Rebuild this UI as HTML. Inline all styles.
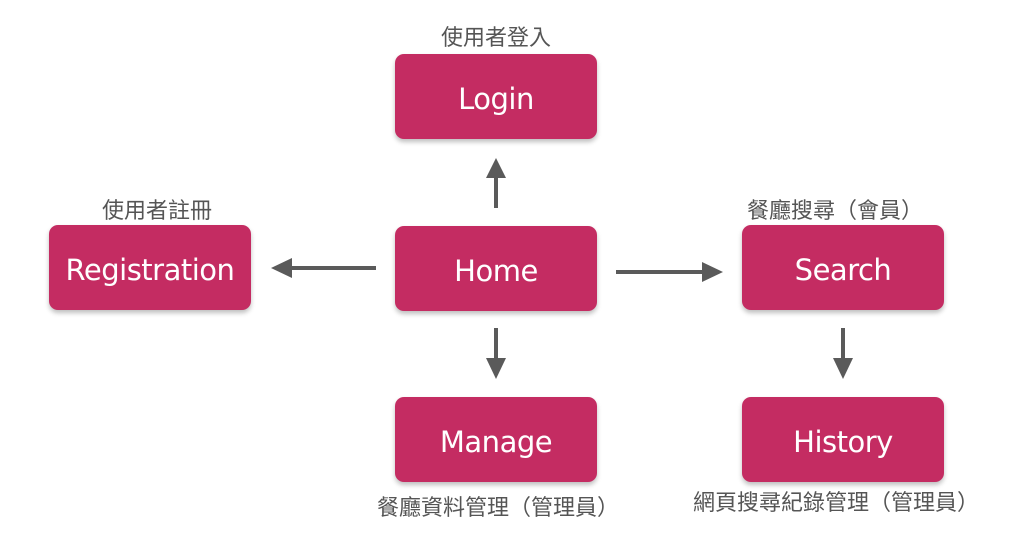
<!DOCTYPE html>
<html><head><meta charset="utf-8"><style>
body{margin:0;width:1020px;height:546px;background:#fff;position:relative;overflow:hidden;font-family:"Liberation Sans","Noto Sans CJK TC",sans-serif}
.b{position:absolute;width:202px;height:85px;background:#c42c62;border-radius:9px;box-shadow:0 3px 5px rgba(0,0,0,.25);color:#fff;font-size:29px;display:flex;align-items:center;justify-content:center;font-family:"DejaVu Sans","Liberation Sans",sans-serif;letter-spacing:-0.5px;padding-top:4px;box-sizing:border-box}
.l{position:absolute;color:#555;font-size:22px;white-space:nowrap;transform:translateX(-50%);line-height:1}
</style></head><body>
<div class="b" style="left:395px;top:54px">Login</div>
<div class="b" style="left:395px;top:226px">Home</div>
<div class="b" style="left:49px;top:225px">Registration</div>
<div class="b" style="left:742px;top:225px">Search</div>
<div class="b" style="left:395px;top:397px">Manage</div>
<div class="b" style="left:742px;top:397px">History</div>
<div class="l" style="left:496px;top:27px">使用者登入</div>
<div class="l" style="left:157px;top:200px">使用者註冊</div>
<div class="l" style="left:835px;top:200px">餐廳搜尋（會員）</div>
<div class="l" style="left:498px;top:497px">餐廳資料管理（管理員）</div>
<div class="l" style="left:836px;top:492px">網頁搜尋紀錄管理（管理員）</div>
<svg width="1020" height="546" style="position:absolute;left:0;top:0" fill="#5a5a5a" stroke="#5a5a5a">
<line x1="496" y1="208" x2="496" y2="176" stroke-width="4"/><polygon points="486,178 506,178 496,158" stroke="none"/>
<line x1="376" y1="268" x2="290" y2="268" stroke-width="4"/><polygon points="292,258 292,278 271,268" stroke="none"/>
<line x1="616" y1="272" x2="704" y2="272" stroke-width="4"/><polygon points="702,262 702,282 723,272" stroke="none"/>
<line x1="496" y1="328" x2="496" y2="360" stroke-width="4"/><polygon points="486,358 506,358 496,379" stroke="none"/>
<line x1="843" y1="328" x2="843" y2="360" stroke-width="4"/><polygon points="833,358 853,358 843,379" stroke="none"/>
</svg>
</body></html>
